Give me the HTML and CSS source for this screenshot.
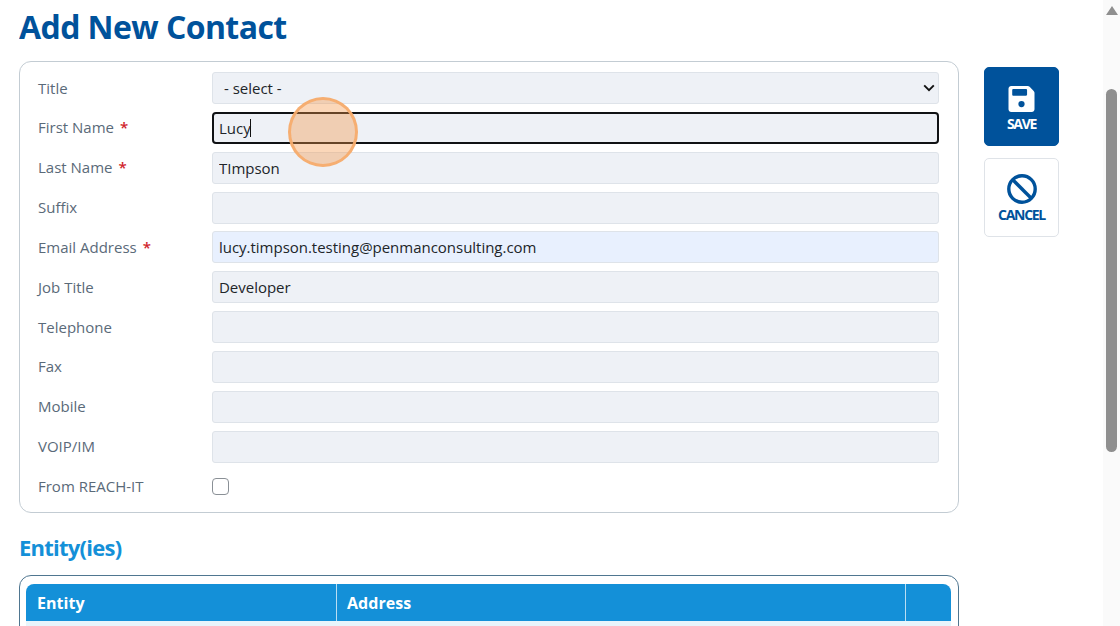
FILE: index.html
```html
<!DOCTYPE html>
<html lang="en">
<head>
<meta charset="utf-8">
<title>Add New Contact</title>
<link rel="stylesheet" href="styles.css">
</head>
<body>
<div class="page">
  <div class="content">
    <main class="main">
      <h1 class="title">Add New Contact</h1>
      <form class="panel form">
        <label class="label" for="f-title">Title</label>
        <div class="select-wrap">
          <select class="field select" id="f-title"><option>- select -</option></select>
          <svg class="chevron" viewBox="0 0 12 8" aria-hidden="true"><path d="M1.2 1.4L6 6.2l4.8-4.8" fill="none" stroke="#111" stroke-width="1.9"/></svg>
        </div>

        <label class="label" for="f-first">First Name <span class="req">*</span></label>
        <div class="focus-wrap">
          <input class="field focused" id="f-first" type="text" value="Lucy">
          <span class="caret"></span>
        </div>

        <label class="label" for="f-last">Last Name <span class="req">*</span></label>
        <input class="field" id="f-last" type="text" value="TImpson">

        <label class="label" for="f-suffix">Suffix</label>
        <input class="field" id="f-suffix" type="text">

        <label class="label" for="f-email">Email Address <span class="req">*</span></label>
        <input class="field autofilled" id="f-email" type="text" value="lucy.timpson.testing@penmanconsulting.com">

        <label class="label" for="f-job">Job Title</label>
        <input class="field" id="f-job" type="text" value="Developer">

        <label class="label" for="f-tel">Telephone</label>
        <input class="field" id="f-tel" type="text">

        <label class="label" for="f-fax">Fax</label>
        <input class="field" id="f-fax" type="text">

        <label class="label" for="f-mobile">Mobile</label>
        <input class="field" id="f-mobile" type="text">

        <label class="label" for="f-voip">VOIP/IM</label>
        <input class="field" id="f-voip" type="text">

        <label class="label" for="f-reach">From REACH-IT</label>
        <div class="check-cell"><span class="check" id="f-reach"></span></div>
      </form>

      <h2 class="subtitle">Entity(ies)</h2>
      <div class="panel table-panel">
        <div class="thead">
          <div class="th th-entity">Entity</div>
          <div class="th th-address">Address</div>
          <div class="th th-action"></div>
        </div>
        <div class="tbody-row"></div>
      </div>
    </main>
    <aside class="actions">
      <button class="action save" type="button">
        <svg class="icon" viewBox="0 0 448 448" aria-hidden="true"><path fill="#fff" fill-rule="evenodd" d="M48 0C21 0 0 21 0 48v352c0 27 21 48 48 48h352c27 0 48-21 48-48V118c0-13-5-25-14-34L364 14c-9-9-21-14-34-14H48zM80 52h224c9 0 16 7 16 16v84c0 9-7 16-16 16H80c-9 0-16-7-16-16V68c0-9 7-16 16-16zm144 206a54 54 0 1 1 0 108 54 54 0 1 1 0-108z"/></svg>
        <span>SAVE</span>
      </button>
      <button class="action cancel" type="button">
        <svg class="icon icon-cancel" viewBox="1 1 30 30" aria-hidden="true"><circle cx="16" cy="16" r="13.2" fill="none" stroke="#00529b" stroke-width="3.4"/><path d="M7 7l18 18" stroke="#00529b" stroke-width="3.4" fill="none"/></svg>
        <span>CANCEL</span>
      </button>
    </aside>
  </div>
  <div class="scrollbar">
    <span class="arrow"></span>
    <span class="thumb"></span>
  </div>
</div>
<div class="click-marker"></div>
</body>
</html>
```
FILE: styles.css
```css
* { box-sizing: border-box; }
html, body { margin: 0; height: 626px; overflow: hidden; background: #fff; }
body { font-family: "Open Sans", "Noto Sans", sans-serif; color: #212529; }
.page { display: flex; height: 626px; overflow: hidden; }
.content { flex: 1; display: flex; padding-left: 19px; min-width: 0; }
.main { width: 940px; height: 626px; overflow: hidden; flex: none; }
.title {
  margin: 0;
  height: 61px;
  padding-top: 5px;
  font-size: 32px;
  line-height: 44px;
  font-weight: 700;
  letter-spacing: -0.58px;
  color: #00529b;
}
.panel { border: 1px solid #c3ccd3; border-radius: 12px; }
.form {
  height: 452px;
  padding: 10px 19px 0 18px;
  display: grid;
  grid-template-columns: 174px 1fr;
  grid-auto-rows: 32px;
  row-gap: 7.85px;
  align-items: center;
}
.label { font-size: 15px; line-height: 20px; padding-bottom: 1px; color: #5a6a79; }
.req { color: #d0232b; margin-left: 2px; font-weight: 600; }
.field {
  display: block;
  width: 100%;
  height: 32px;
  border: 1px solid #dee3e9;
  border-radius: 3px;
  background: #eef1f6;
  padding: 0 6px;
  font: 15px/20px "Open Sans", "Noto Sans", sans-serif;
  letter-spacing: -0.02px;
  color: #212529;
  outline: none;
}
.select-wrap { position: relative; height: 32px; }
.select { padding: 0 11px; appearance: none; -webkit-appearance: none; }
.chevron { position: absolute; right: 4px; top: 12px; width: 12px; height: 8px; }
.autofilled { background: #e8f0fe; }
.focus-wrap { position: relative; height: 32px; }
.focused { border: 2px solid #101214; border-radius: 4px; padding: 0 5px; }
.caret { position: absolute; left: 38px; top: 7px; width: 1px; height: 18px; background: #111; }
.check-cell { display: flex; align-items: center; }
.check {
  display: block;
  width: 17px;
  height: 17px;
  border: 1.5px solid #8a9096;
  border-radius: 4px;
  background: #fff;
}
.subtitle {
  margin: 0;
  height: 62px;
  padding-top: 19px;
  font-size: 22px;
  line-height: 30px;
  font-weight: 700;
  letter-spacing: -0.75px;
  color: #1490d8;
}
.table-panel {
  height: 120px;
  padding: 8px 7px 0 6px;
  border-color: #4f7690;
}
.thead {
  display: flex;
  height: 37px;
  background: #1490d8;
  border-radius: 8px 8px 0 0;
}
.th {
  padding: 0 10px;
  font-size: 16px;
  line-height: 38px;
  font-weight: 700;
  color: #fff;
  letter-spacing: 0.05px;
}
.th-entity { width: 311px; padding-left: 11px; border-right: 1px solid #b9def3; }
.th-address { width: 569px; border-right: 1px solid #b9def3; }
.th-action { flex: 1; }
.tbody-row { height: 40px; background: #e8f5fc; }
.actions {
  flex: none;
  margin-left: 25px;
  padding-top: 67px;
  display: flex;
  flex-direction: column;
  gap: 12px;
}
.action {
  width: 75px;
  height: 79px;
  padding: 0;
  border-radius: 5px;
  display: flex;
  flex-direction: column;
  align-items: center;
  font-family: "Open Sans", "Noto Sans", sans-serif;
  font-size: 14px;
  line-height: 18px;
  font-weight: 700;
  letter-spacing: -1.3px;
}
.icon { display: block; width: 27px; height: 26px; }
.save { background: #00529b; border: 1px solid #00529b; color: #fff; padding-top: 18px; }
.save .icon { margin-bottom: 3px; }
.cancel { background: #fff; border: 1px solid #dfe3e8; color: #00529b; padding-top: 15px; }
.icon-cancel { width: 30px; height: 30px; margin-bottom: 2px; }
.scrollbar {
  position: relative;
  flex: none;
  width: 17px;
  background: #fafafa;
  display: flex;
  flex-direction: column;
  align-items: center;
}
.arrow {
  margin-top: 6px;
  width: 0;
  height: 0;
  border-left: 6px solid transparent;
  border-right: 6px solid transparent;
  border-bottom: 9px solid #8f8f8f;
}
.thumb {
  margin-top: 74px;
  width: 11px;
  height: 363px;
  border-radius: 6px;
  background: #8f8f8f;
}
.click-marker {
  position: absolute;
  left: 288px;
  top: 97px;
  width: 70px;
  height: 70px;
  border-radius: 50%;
  background: rgba(245, 150, 70, 0.38);
  border: 3px solid rgba(245, 172, 110, 0.95);
}
```
